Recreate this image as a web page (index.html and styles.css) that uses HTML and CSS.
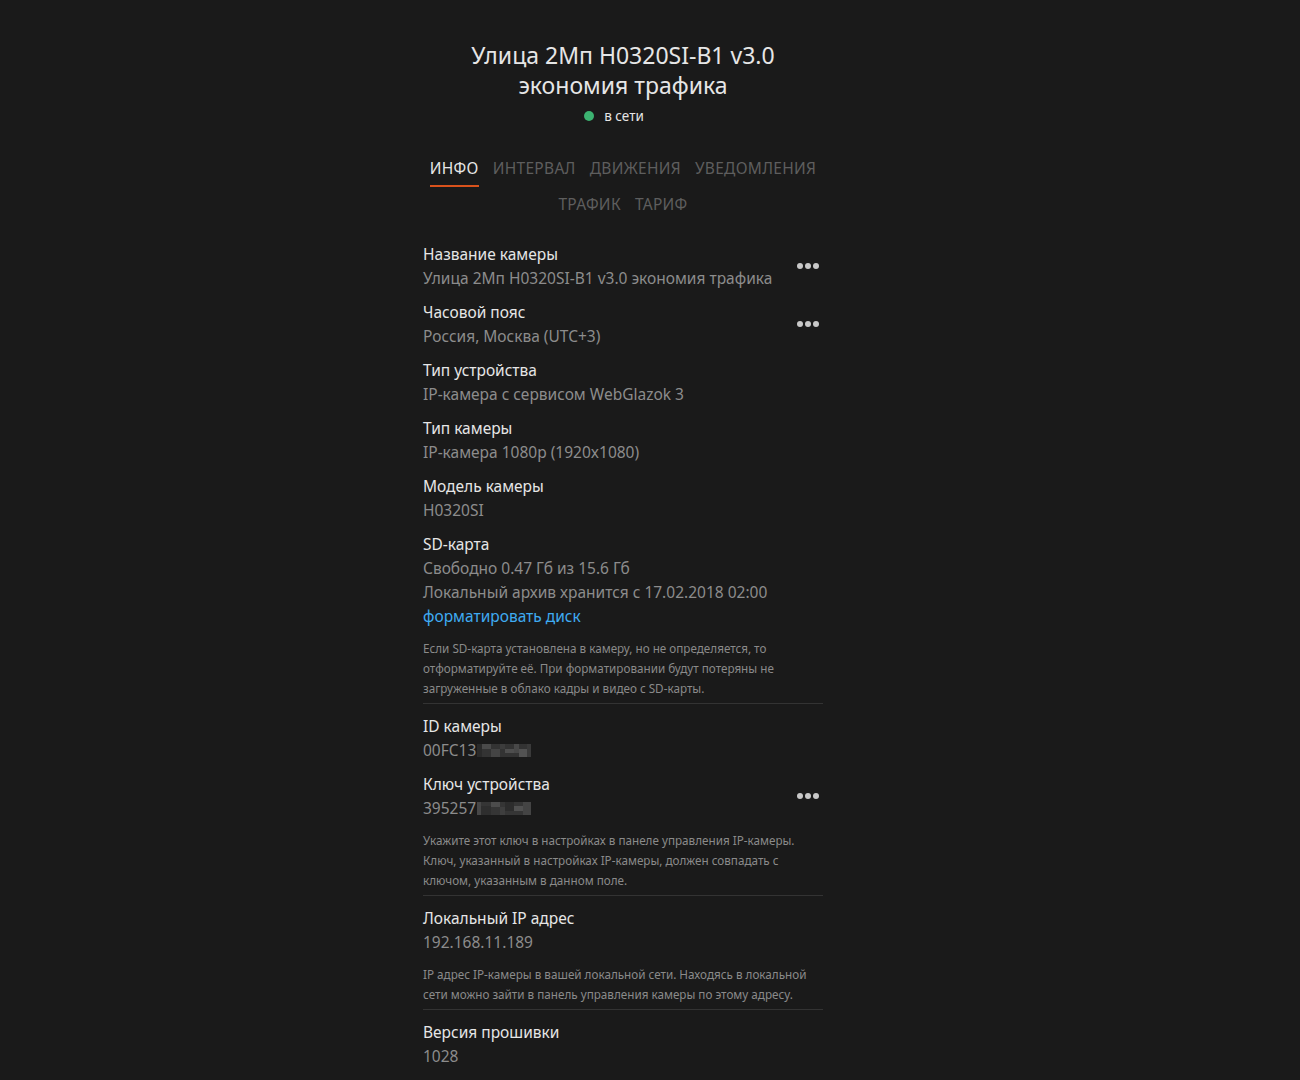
FILE: index.html
```html
<!DOCTYPE html>
<html lang="ru">
<head>
    <meta charset="UTF-8">
    <meta name="viewport" content="width=device-width, initial-scale=1.0">
    <title>Настройки камеры</title>
    <link rel="stylesheet" href="styles.css">
</head>
<body>

<div class="page">
    <div class="container">
        <h1 class="title">Улица 2Мп H0320SI-B1 v3.0<br>экономия трафика</h1>
        <div class="status"><span class="status-dot"></span>в сети</div>

        <nav class="tabs">
            <a class="tab active" href="#">Инфо</a>
            <a class="tab" href="#">Интервал</a>
            <a class="tab" href="#">Движения</a>
            <a class="tab" href="#">Уведомления</a>
            <a class="tab" href="#">Трафик</a>
            <a class="tab" href="#">Тариф</a>
        </nav>

        <div class="info">
            <div class="item">
                <div class="item-head">
                    <div class="item-body">
                        <div class="label">Название камеры</div>
                        <div class="value">Улица 2Мп H0320SI-B1 v3.0 экономия трафика</div>
                    </div>
                    <button class="more" type="button"><span></span><span></span><span></span></button>
                </div>
            </div>

            <div class="item">
                <div class="item-head">
                    <div class="item-body">
                        <div class="label">Часовой пояс</div>
                        <div class="value">Россия, Москва (UTC+3)</div>
                    </div>
                    <button class="more" type="button"><span></span><span></span><span></span></button>
                </div>
            </div>

            <div class="item">
                <div class="label">Тип устройства</div>
                <div class="value">IP-камера с сервисом WebGlazok 3</div>
            </div>

            <div class="item">
                <div class="label">Тип камеры</div>
                <div class="value">IP-камера 1080p (1920x1080)</div>
            </div>

            <div class="item">
                <div class="label">Модель камеры</div>
                <div class="value">H0320SI</div>
            </div>

            <div class="item sep">
                <div class="label">SD-карта</div>
                <div class="value">Свободно 0.47 Гб из 15.6 Гб</div>
                <div class="value">Локальный архив хранится с 17.02.2018 02:00</div>
                <a class="link" href="#">форматировать диск</a>
                <p class="hint">Если SD-карта установлена в камеру, но не определяется, то отформатируйте её. При форматировании будут потеряны не загруженные в облако кадры и видео с SD-карты.</p>
            </div>

            <div class="item">
                <div class="label">ID камеры</div>
                <div class="value">00FC13<svg class="blur" width="54" height="13" viewBox="0 0 54 13">
                    <rect x="0" y="0" width="54" height="13" fill="#333"/>
                    <rect x="0" y="0" width="5" height="13" fill="#2a2a2a"/>
                    <rect x="5" y="0" width="9" height="5" fill="#4a4a4a"/>
                    <rect x="14" y="5" width="9" height="8" fill="#444"/>
                    <rect x="23" y="0" width="5" height="5" fill="#3c3c3c"/>
                    <rect x="28" y="5" width="9" height="4" fill="#4e4e4e"/>
                    <rect x="37" y="0" width="5" height="9" fill="#484848"/>
                    <rect x="42" y="5" width="8" height="8" fill="#525252"/>
                    <rect x="50" y="0" width="4" height="13" fill="#3a3a3a"/>
                </svg></div>
            </div>

            <div class="item sep">
                <div class="item-head">
                    <div class="item-body">
                        <div class="label">Ключ устройства</div>
                        <div class="value">395257<svg class="blur" width="54" height="13" viewBox="0 0 54 13">
                            <rect x="0" y="0" width="54" height="13" fill="#353535"/>
                            <rect x="0" y="0" width="4" height="13" fill="#474747"/>
                            <rect x="4" y="4" width="10" height="9" fill="#2e2e2e"/>
                            <rect x="14" y="0" width="9" height="5" fill="#4c4c4c"/>
                            <rect x="23" y="5" width="5" height="8" fill="#3e3e3e"/>
                            <rect x="28" y="0" width="9" height="9" fill="#2c2c2c"/>
                            <rect x="37" y="4" width="9" height="5" fill="#505050"/>
                            <rect x="46" y="0" width="8" height="13" fill="#444"/>
                        </svg></div>
                    </div>
                    <button class="more" type="button"><span></span><span></span><span></span></button>
                </div>
                <p class="hint">Укажите этот ключ в настройках в панеле управления IP-камеры. Ключ, указанный в настройках IP-камеры, должен совпадать с ключом, указанным в данном поле.</p>
            </div>

            <div class="item sep">
                <div class="label">Локальный IP адрес</div>
                <div class="value">192.168.11.189</div>
                <p class="hint">IP адрес IP-камеры в вашей локальной сети. Находясь в локальной сети можно зайти в панель управления камеры по этому адресу.</p>
            </div>

            <div class="item">
                <div class="label">Версия прошивки</div>
                <div class="value">1028</div>
            </div>
        </div>
    </div>
</div>

</body>
</html>
```

FILE: styles.css
```css
body {
    font-family: "Noto Sans", "Open Sans", sans-serif;
    background-color: #1a1a1a;
    color: #e6e6e6;
    margin: 0;
    padding: 0;
}

.page {
    width: 1246px;
    display: flex;
    justify-content: center;
    padding-top: 40px;
}

.container {
    width: 400px;
}

.title {
    margin: 0;
    font-size: 23px;
    font-weight: 400;
    line-height: 30px;
    text-align: center;
    color: #e6e6e6;
    white-space: nowrap;
}

.status {
    display: flex;
    justify-content: center;
    align-items: center;
    margin-top: 6px;
    padding-right: 18px;
    font-size: 13.5px;
    line-height: 20px;
    color: #e6e6e6;
}

.status-dot {
    width: 10px;
    height: 10px;
    border-radius: 50%;
    background-color: #3cb371;
    margin-right: 10px;
}

.tabs {
    display: flex;
    flex-wrap: wrap;
    justify-content: center;
    column-gap: 14px;
    margin-top: 25px;
}

.tab {
    padding: 7px 0;
    border-bottom: 2px solid transparent;
    font-size: 15.5px;
    letter-spacing: 0.3px;
    line-height: 20px;
    text-transform: uppercase;
    text-decoration: none;
    color: #5e5e5e;
}

.tab.active {
    color: #e6e6e6;
    border-bottom-color: #d9521c;
}

.info {
    margin-top: 14px;
}

.item {
    padding: 5px 0;
}

.item.sep {
    border-bottom: 1px solid #333;
    margin-bottom: 5px;
}

.item-head {
    display: flex;
    align-items: center;
}

.item-body {
    flex: 1;
}

.label {
    font-size: 15.5px;
    line-height: 24px;
    color: #e6e6e6;
}

.value {
    font-size: 15.5px;
    line-height: 24px;
    color: #8c8c8c;
}

.blur {
    vertical-align: -1px;
    margin-left: 1px;
}

.link {
    display: block;
    font-size: 15.5px;
    line-height: 24px;
    color: #3fabf2;
    text-decoration: none;
}

.hint {
    margin: 10px 0 0;
    font-size: 11.7px;
    line-height: 20px;
    color: #8a8a8a;
}

.more {
    display: flex;
    gap: 2px;
    padding: 0;
    margin-right: 4px;
    border: none;
    background: none;
    cursor: pointer;
}

.more span {
    width: 6px;
    height: 6px;
    border-radius: 50%;
    background-color: #c8c8c8;
}
```
